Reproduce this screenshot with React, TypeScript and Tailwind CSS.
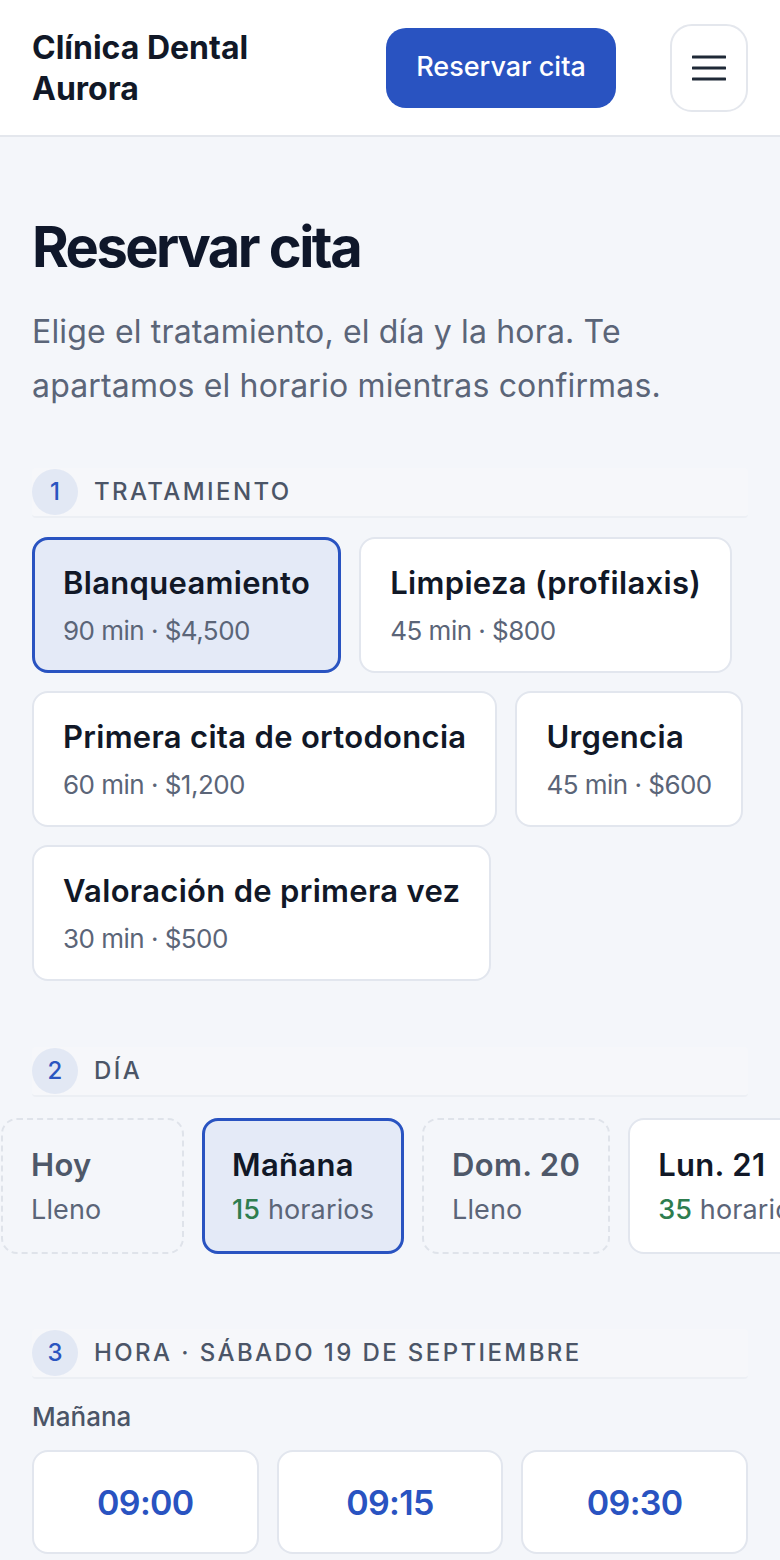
import React from 'react';

const treatments = [
  { name: 'Blanqueamiento', meta: '90 min · $4,500', selected: true },
  { name: 'Limpieza (profilaxis)', meta: '45 min · $800' },
  { name: 'Primera cita de ortodoncia', meta: '60 min · $1,200' },
  { name: 'Urgencia', meta: '45 min · $600' },
  { name: 'Valoración de primera vez', meta: '30 min · $500' },
];

const days = [
  { label: 'Hoy', full: true },
  { label: 'Mañana', slots: 15, selected: true },
  { label: 'Dom. 20', full: true },
  { label: 'Lun. 21', slots: 35 },
];

const times = ['09:00', '09:15', '09:30'];

const StepHeader: React.FC<{ n: number; label: string }> = ({ n, label }) => (
  <div className="flex items-center gap-4 h-[50px] bg-[#f6f7fa] border-b-2 border-[#eceff4] rounded-sm">
    <span className="w-[46px] h-[46px] rounded-full bg-[#e2e8f4] text-[#2a55c0] flex items-center justify-center text-[24px] font-medium">
      {n}
    </span>
    <span className="text-[24px] font-medium tracking-[0.1em] text-[#4b5567] uppercase">{label}</span>
  </div>
);

export default function App() {
  return (
    <div
      className="min-h-screen bg-[#f4f6fa] text-[#111827] overflow-hidden"
      style={{ fontFamily: 'Inter, "Noto Sans", sans-serif' }}
    >
      {/* Header */}
      <header className="h-[137px] bg-white border-b-2 border-[#e4e7ed] flex items-center justify-between px-8">
        <div className="text-[32px] font-bold leading-[41px] max-w-[260px] text-[#111827]">
          Clínica Dental Aurora
        </div>
        <div className="flex items-center gap-[54px]">
          <button className="w-[230px] h-[80px] rounded-[20px] bg-[#2953c1] text-white text-[27px] font-medium">
            Reservar cita
          </button>
          <button className="w-[78px] h-[88px] rounded-[22px] border-2 border-[#e4e7ed] bg-white flex items-center justify-center">
            <svg width="34" height="26" viewBox="0 0 34 26" fill="none">
              <path d="M1 2h32M1 13h32M1 24h32" stroke="#1f2937" strokeWidth="3" strokeLinecap="round" />
            </svg>
          </button>
        </div>
      </header>

      <main className="px-8 pt-[78px]">
        <h1 className="text-[56px] font-bold leading-[64px] tracking-[-0.045em] text-[#0f172a]">Reservar cita</h1>
        <p className="mt-[26px] text-[32px] leading-[54px] text-[#5b6578] tracking-[0.005em]">
          Elige el tratamiento, el día y la hora. Te apartamos el horario mientras confirmas.
        </p>

        {/* Step 1 */}
        <section className="mt-[55px]">
          <StepHeader n={1} label="Tratamiento" />
          <div className="mt-[19px] -mr-3 flex flex-wrap gap-[18px]">
            {treatments.map((t) => (
              <div
                key={t.name}
                className={`h-[136px] rounded-[16px] flex flex-col justify-center ${
                  t.selected
                    ? 'border-[3px] border-[#2953c1] bg-[#e4eaf7] px-[28px]'
                    : 'border-2 border-[#e2e6ee] bg-white px-[29px]'
                }`}
              >
                <div className="text-[31px] font-semibold leading-[40px] tracking-[0.01em] text-[#111827] whitespace-nowrap">
                  {t.name}
                </div>
                <div className="mt-[11px] text-[26px] leading-[34px] text-[#5b6578] tracking-[-0.02em] whitespace-nowrap">
                  {t.meta}
                </div>
              </div>
            ))}
          </div>
        </section>

        {/* Step 2 */}
        <section className="mt-[66px]">
          <StepHeader n={2} label="Día" />
          <div className="mt-[21px] -mx-8 pl-px flex gap-[18px]">
            {days.map((d) => (
              <div
                key={d.label}
                className={`shrink-0 min-w-[183px] h-[136px] rounded-[16px] flex flex-col justify-center ${
                  d.selected
                    ? 'border-[3px] border-[#2953c1] bg-[#e4eaf7] px-[27px]'
                    : d.full
                    ? 'border-2 border-dashed border-[#dfe3ea] px-[28px]'
                    : 'border-2 border-[#e2e6ee] bg-white px-[28px]'
                }`}
              >
                <div
                  className={`text-[31px] font-semibold leading-[40px] tracking-[0.01em] whitespace-nowrap ${
                    d.full ? 'text-[#4e5869]' : 'text-[#111827]'
                  }`}
                >
                  {d.label}
                </div>
                <div className="mt-[8px] text-[27px] leading-[34px] text-[#5b6578] tracking-[0.005em] whitespace-nowrap">
                  {d.full ? (
                    'Lleno'
                  ) : (
                    <>
                      <span className="text-[#2e7d4f] font-medium">{d.slots}</span> horarios
                    </>
                  )}
                </div>
              </div>
            ))}
          </div>
        </section>

        {/* Step 3 */}
        <section className="mt-[75px]">
          <StepHeader n={3} label="Hora · Sábado 19 de septiembre" />
          <div className="mt-[21px] text-[26px] font-medium leading-[34px] text-[#4b5567]">Mañana</div>
          <div className="mt-[16px] grid grid-cols-3 gap-[18px]">
            {times.map((t) => (
              <div
                key={t}
                className="h-[104px] rounded-[16px] border-2 border-[#e2e6ee] bg-white flex items-center justify-center text-[34px] font-semibold text-[#2953c1] tracking-[-0.02em]"
              >
                {t}
              </div>
            ))}
          </div>
        </section>
      </main>
    </div>
  );
}
